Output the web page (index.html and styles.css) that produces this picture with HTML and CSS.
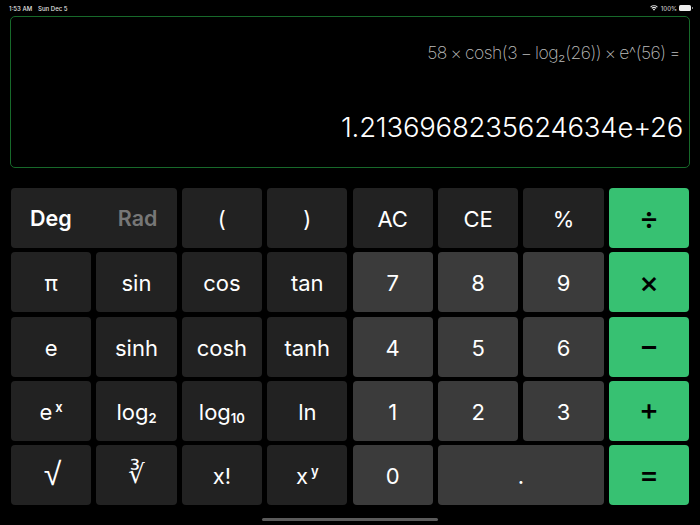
FILE: index.html
```html
<!DOCTYPE html>
<html lang="en">
<head>
<meta charset="utf-8">
<title>Calculator</title>
<link rel="stylesheet" href="styles.css">
</head>
<body>
<div class="app">
  <header class="status">
    <div class="status-left"><span>1:53 AM</span><span>Sun Dec 5</span></div>
    <div class="status-right">
      <svg class="wifi" width="10" height="8" viewBox="0 0 10 8"><path d="M5 7.6 3.4 5.8a2.4 2.4 0 0 1 3.2 0zM2.6 5 1.6 3.9a5 5 0 0 1 6.8 0L7.4 5a3.6 3.6 0 0 0-4.8 0zM.9 3.2 0 2.2a7.4 7.4 0 0 1 10 0l-.9 1a6 6 0 0 0-8.2 0z" fill="#e8e8e8"/></svg>
      <span>100%</span>
      <span class="battery"></span>
    </div>
  </header>
  <section class="display">
    <div class="expression">58 × cosh(3 − log₂(26)) × e^(56) =</div>
    <div class="result">1.2136968235624634e+26</div>
  </section>
  <main class="keypad">
    <button class="key wide split"><b>Deg</b><b class="off">Rad</b></button>
    <button class="key">(</button>
    <button class="key">)</button>
    <button class="key">AC</button>
    <button class="key">CE</button>
    <button class="key">%</button>
    <button class="key op">÷</button>

    <button class="key">π</button>
    <button class="key">sin</button>
    <button class="key">cos</button>
    <button class="key">tan</button>
    <button class="key num">7</button>
    <button class="key num">8</button>
    <button class="key num">9</button>
    <button class="key op">×</button>

    <button class="key">e</button>
    <button class="key">sinh</button>
    <button class="key">cosh</button>
    <button class="key">tanh</button>
    <button class="key num">4</button>
    <button class="key num">5</button>
    <button class="key num">6</button>
    <button class="key op raise">−</button>

    <button class="key">e<sup>x</sup></button>
    <button class="key">log<sub>2</sub></button>
    <button class="key">log<sub>10</sub></button>
    <button class="key">ln</button>
    <button class="key num">1</button>
    <button class="key num">2</button>
    <button class="key num">3</button>
    <button class="key op raise">+</button>

    <button class="key root">√</button>
    <button class="key cbrt">∛</button>
    <button class="key">x!</button>
    <button class="key">x<sup>y</sup></button>
    <button class="key num">0</button>
    <button class="key num wide dot">.</button>
    <button class="key op raise-small">=</button>
  </main>
  <div class="home"></div>
</div>
</body>
</html>
```
FILE: styles.css
```css
* { box-sizing: border-box; }
html, body { margin: 0; padding: 0; background: #000; }
body { font-family: Inter, "Liberation Sans", sans-serif; color: #fff; }
.app { width: 700px; height: 525px; display: flex; flex-direction: column; overflow: hidden; }
.status { height: 16px; padding: 0 9px 0 9px; display: flex; justify-content: space-between; align-items: center; font-size: 6px; font-weight: 500; color: #e4e4e4; }
.status-left { display: flex; gap: 6px; }
.status-right { display: flex; align-items: center; gap: 2px; color: #c8c8c8; }
.wifi { width: 8px; height: 6px; margin-right: 1px; }
.battery { width: 12px; height: 6px; border-radius: 1.5px; background: #eee; display: block; position: relative; }
.battery::after { content: ""; position: absolute; right: -1.5px; top: 2px; width: 1px; height: 2px; background: #888; }
.display { height: 152px; margin: 0 10px; border: 1px solid #17692a; border-radius: 5px; padding: 25px 9px 0 0; display: flex; flex-direction: column; align-items: flex-end; }
.expression { font-size: 17.5px; line-height: 22px; font-weight: 200; color: #bcbcbc; letter-spacing: -0.5px; word-spacing: -0.8px; }
.result { margin-top: 45px; margin-right: -3px; font-size: 27.5px; line-height: 36px; font-weight: 300; color: #fff; letter-spacing: -0.2px; }
.keypad { margin: 20px 11px 0; display: grid; grid-template-columns: repeat(8, 1fr); grid-auto-rows: 60px; column-gap: 5.3px; row-gap: 4.35px; }
.key { appearance: none; border: 0; margin: 0; padding: 2px 0 0; border-radius: 4px; background: #222; color: #fff; font-family: inherit; font-size: 22px; font-weight: 400; display: flex; align-items: center; justify-content: center; line-height: 1; }
.key sup { font-size: 13px; font-weight: 600; margin-left: 3px; align-self: flex-start; margin-top: 18px; line-height: 1; }
.key sub { font-size: 13px; font-weight: 600; align-self: flex-end; margin-bottom: 16px; line-height: 1; }
.wide { grid-column: span 2; }
.num { background: #3b3b3b; }
.key.op { background: #37c172; color: #000; font-size: 30px; font-weight: 500; padding: 0; }
.key.raise { padding-bottom: 4px; }
.key.raise-small { padding-bottom: 2px; }
.key.split { justify-content: space-between; padding: 2px 19px 0; }
.split b { font-weight: 600; font-size: 21.5px; }
.split .off { color: #777; }
.key.root { font-family: "Liberation Sans", sans-serif; font-size: 32px; padding: 0 0 3px 3px; }
.key.cbrt { font-family: "DejaVu Sans", sans-serif; font-size: 26px; padding: 0 0 2px; }
.home { width: 176px; height: 3px; border-radius: 2px; background: #5a5a5a; margin: 13px auto 0; }
```
